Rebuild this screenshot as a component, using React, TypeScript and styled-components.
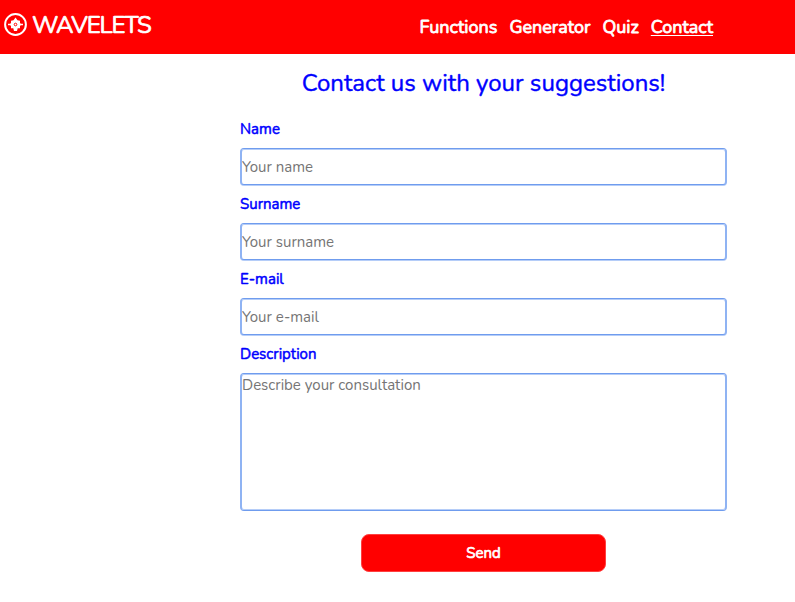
import React from "react";
import styled, { createGlobalStyle, css } from "styled-components";

const GlobalStyle = createGlobalStyle`
  * { box-sizing: border-box; }
  body {
    margin: 0;
    background: #fff;
    font-family: Nunito, Lato, sans-serif;
  }
`;

const Header = styled.header`
  display: flex;
  justify-content: space-between;
  height: 54px;
  padding: 0 82px 0 4px;
  background: #f00;
  color: #fff;
`;

const Brand = styled.div`
  display: flex;
  align-items: center;
  gap: 5px;
  height: 50px;
  font-size: 24px;
  font-weight: 400;
  letter-spacing: -1.05px;
  -webkit-text-stroke: 0.7px #fff;
`;

const Logo = styled.svg`
  width: 23px;
  height: 23px;
  margin-top: -2px;
  display: block;
`;

const Nav = styled.nav`
  display: flex;
  align-items: center;
  gap: 12px;
`;

const NavLink = styled.a<{ $active?: boolean }>`
  color: #fff;
  font-size: 18px;
  line-height: 24px;
  font-weight: 400;
  -webkit-text-stroke: 0.8px #fff;
  text-decoration: ${(p) => (p.$active ? "underline" : "none")};
  text-decoration-thickness: 1px;
  text-underline-offset: 2px;
  text-decoration-skip-ink: none;
`;

const Form = styled.form`
  display: flex;
  flex-direction: column;
  width: 487px;
  margin-left: 240px;
`;

const Title = styled.h1`
  margin: 11px 0 0;
  height: 53px;
  color: #00f;
  text-align: center;
  font-size: 24px;
  line-height: 36px;
  font-weight: 400;
  -webkit-text-stroke: 0.4px #00f;
`;

const Field = styled.div`
  display: flex;
  flex-direction: column;
  min-height: 75px;
`;

const Label = styled.label`
  height: 30px;
  color: #00f;
  font-size: 15px;
  line-height: 22px;
  font-weight: 400;
  -webkit-text-stroke: 0.5px #00f;
`;

const control = css`
  display: block;
  width: 100%;
  border: solid #6f9cee;
  border-width: 1px 2px;
  border-left-color: #8fb3f3;
  border-right-color: #8fb3f3;
  border-radius: 4px;
  background: #fff;
  font-family: inherit;
  font-size: 15px;
  outline: none;
  &::placeholder {
    color: #757575;
    opacity: 1;
  }
`;

const Input = styled.input`
  ${control}
  height: 37px;
  padding: 0;
  box-shadow: inset 0 1px 0 #b5cdf8, 0 1px 0 #b5cdf8;
`;

const TextArea = styled.textarea`
  ${control}
  height: 138px;
  padding: 1px 0;
  line-height: 20px;
  resize: none;
  box-shadow: inset 0 1px 0 #b5cdf8, inset 0 -1px 0 #b5cdf8;
`;

const Send = styled.button`
  width: 245px;
  height: 38px;
  margin: 23px 0 0 121px;
  padding: 0;
  border: 1px solid #ff4040;
  border-radius: 8px;
  background: #f00;
  color: #fff;
  font: 400 15px Nunito, Lato, sans-serif;
  -webkit-text-stroke: 0.7px #fff;
`;

const links = ["Functions", "Generator", "Quiz", "Contact"];

const fields = [
  { id: "name", label: "Name", hint: "Your name" },
  { id: "surname", label: "Surname", hint: "Your surname" },
  { id: "email", label: "E-mail", hint: "Your e-mail" },
];

export default function App() {
  return (
    <>
      <GlobalStyle />
      <Header>
        <Brand>
          <Logo viewBox="0 0 23 23" fill="none" stroke="#fff">
            <circle cx="11.5" cy="11.5" r="10.4" strokeWidth="2" />
            <path d="M4 11.5h15" strokeWidth="1.5" />
            <path
              d="M11.5 4.5l2 2.7 2.5.6v2l1 1.700-1 1.700v2h-2.300L13 18h-3l-.7-2.800H7v-2l-1-1.700 1-1.700v-2l2.500-.6z"
              fill="#fff"
              stroke="none"
            />
            <circle cx="11.5" cy="11.5" r="1.3" stroke="#f00" strokeWidth="1" />
          </Logo>
          WAVELETS
        </Brand>
        <Nav>
          {links.map((name) => (
            <NavLink key={name} $active={name === "Contact"}>
              {name}
            </NavLink>
          ))}
        </Nav>
      </Header>
      <Form>
        <Title>Contact us with your suggestions!</Title>
        {fields.map((f) => (
          <Field key={f.id}>
            <Label htmlFor={f.id}>{f.label}</Label>
            <Input id={f.id} placeholder={f.hint} />
          </Field>
        ))}
        <Field>
          <Label htmlFor="description">Description</Label>
          <TextArea id="description" placeholder="Describe your consultation" />
        </Field>
        <Send type="button">Send</Send>
      </Form>
    </>
  );
}
